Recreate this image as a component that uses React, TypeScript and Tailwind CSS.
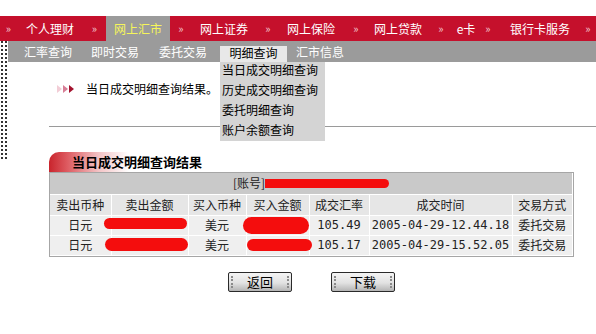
import React from 'react';

const cjk = { fontFamily: '"Noto Sans CJK SC", "Noto Sans", sans-serif' };
const mono = { fontFamily: '"DejaVu Sans Mono", "Liberation Mono", monospace' };

const topNav: { label: string; w: string; active?: boolean }[] = [
  { label: '个人理财', w: 'w-[66px]' },
  { label: '网上汇市', w: 'w-[64px]', active: true },
  { label: '网上证券', w: 'w-[64px]' },
  { label: '网上保险', w: 'w-[62px]' },
  { label: '网上贷款', w: 'w-[56px]' },
  { label: 'e卡', w: 'w-[20px]' },
  { label: '银行卡服务', w: 'w-[80px]' },
];
const sepW = ['w-[17px]', 'w-[23px]', 'w-[22px]', 'w-[24px]', 'w-[28px]', 'w-[30px]', 'w-[24px]', 'w-[16px]'];

const Sep = ({ w }: { w: string }) => (
  <span className={`${w} text-center text-[11px] text-[#f3c7cf]`}>»</span>
);

const Arrows = () => (
  <svg width="18" height="8" viewBox="0 0 18 8">
    <polygon points="0,0 5,4 0,8" fill="#f2cdd6" />
    <polygon points="6,0 11,4 6,8" fill="#d87e96" />
    <polygon points="12,0 17,4 12,8" fill="#a3122e" />
  </svg>
);

const Redact = ({ cls }: { cls: string }) => (
  <span className={`absolute rounded-full bg-[#f40d0d] ${cls}`} />
);

const Button = ({ label }: { label: string }) => (
  <button className="relative flex h-[20px] w-[64px] items-center justify-center rounded-[2px] border border-[#2a2a2a] bg-[linear-gradient(to_bottom,#f4f4f4,#e2e2e2_55%,#b4b4b4)] text-[13px] text-black">
    <span className="absolute left-[2px] top-[3px] h-[12px] w-[2px] border-l-2 border-dotted border-[#8a8a8a]" />
    {label}
    <span className="absolute right-[2px] top-[3px] h-[12px] w-[2px] border-l-2 border-dotted border-[#8a8a8a]" />
  </button>
);

const td = 'border-r border-b border-white text-center text-[12px] text-[#222] p-0';

const rows = [
  { rate: '105.49', time: '2005-04-29-12.44.18', a: 'left-[-8px] top-[2px] w-[83px] h-[11px]', b: 'left-[-4px] top-[1px] w-[66px] h-[17px]' },
  { rate: '105.17', time: '2005-04-29-15.52.05', a: 'left-[-7px] top-[2px] w-[83px] h-[13px]', b: 'left-[0px] top-[3px] w-[65px] h-[12px]' },
];

export default function App() {
  return (
    <div className="h-[334px] w-[596px] overflow-hidden bg-white" style={cjk}>
      <div className="h-[16px]" />
      <div className="flex h-[25px] items-center bg-[#c5102c] text-[12px] text-white">
        {topNav.map((n, i) => (
          <React.Fragment key={n.label}>
            <Sep w={sepW[i]} />
            <span
              className={`${n.w} flex h-full items-center justify-center whitespace-nowrap ${
                n.active ? 'bg-[#9b9b9b] text-[#f6f55a]' : ''
              }`}
            >
              {n.label}
            </span>
          </React.Fragment>
        ))}
        <Sep w={sepW[7]} />
      </div>

      <div className="flex">
        <div className="ml-[1px] mr-[1px] h-[118px] w-[6px] border-x-2 border-dotted border-[#333]" />
        <div className="relative flex-1">
          <div className="flex h-[21px] items-center whitespace-nowrap bg-[#9b9b9b] pl-[16px] text-[12px] text-white">
            <span className="w-[48px]">汇率查询</span>
            <span className="ml-[19px] w-[48px]">即时交易</span>
            <span className="ml-[20px] w-[48px]">委托交易</span>
            <span className="ml-[13px] h-[16px] w-[67px] self-end bg-[#e8e8e8] text-center leading-[13px] text-black">
              明细查询
            </span>
            <span className="ml-[9px]">汇市信息</span>
          </div>

          <div className="absolute left-[212px] top-[21px] z-10 h-[79px] w-[105px] bg-[#d4d4d4] pl-[2px] text-[12px] text-black">
            <div className="-mt-[2px] flex flex-col whitespace-nowrap leading-[20px]">
              <span>当日成交明细查询</span>
              <span>历史成交明细查询</span>
              <span>委托明细查询</span>
              <span>账户余额查询</span>
            </div>
          </div>

          <div className="ml-[49px] mt-[19px] flex h-[16px] items-center text-[12px] leading-[16px] text-black">
            <Arrows />
            <span className="ml-[11px]">当日成交明细查询结果。</span>
          </div>

          <div className="ml-[41px] mt-[29px] h-px bg-[#9a9a9a]" />

          <div className="ml-[41px] mt-[25px] w-[525px]">
            <div className="flex h-[20px] items-center rounded-tl-[10px] bg-[linear-gradient(to_right,#c9242c_0px,#dd5a60_18px,#f3c4c6_50px,#ffffff_80px)] pl-[23px] text-[13px] font-bold text-black">
              当日成交明细查询结果
            </div>
            <div className="border border-[#a6a6a6]">
              <table className="w-full table-fixed border-collapse">
                <colgroup>
                  <col className="w-[61px]" />
                  <col className="w-[77px]" />
                  <col className="w-[58px]" />
                  <col className="w-[63px]" />
                  <col className="w-[60px]" />
                  <col className="w-[143px]" />
                  <col />
                </colgroup>
                <tbody>
                  <tr className="h-[21px] bg-[#c9c9c9]">
                    <td colSpan={7} className={td}>
                      <span className="inline-flex items-center">
                        [账号]
                        <span className="inline-block h-[9px] w-[124px] rounded-l-[3px] rounded-r-full bg-[#f40d0d]" />
                      </span>
                    </td>
                  </tr>
                  <tr className="h-[21px] bg-[#e6e6e6]">
                    {['卖出币种', '卖出金额', '买入币种', '买入金额', '成交汇率', '成交时间', '交易方式'].map((h) => (
                      <td key={h} className={td}>
                        {h}
                      </td>
                    ))}
                  </tr>
                  {rows.map((r) => (
                    <tr key={r.time} className="h-[20px] bg-[#efefef]">
                      <td className={td}>日元</td>
                      <td className={`${td} relative`}>
                        <Redact cls={r.a} />
                      </td>
                      <td className={td}>美元</td>
                      <td className={`${td} relative`}>
                        <Redact cls={r.b} />
                      </td>
                      <td className={`${td} text-[10px]`} style={mono}>
                        {r.rate}
                      </td>
                      <td className={`${td} text-[10px]`} style={mono}>
                        {r.time}
                      </td>
                      <td className={td}>委托交易</td>
                    </tr>
                  ))}
                </tbody>
              </table>
            </div>
            <div className="mt-[15px] flex justify-center gap-[39px]">
              <Button label="返回" />
              <Button label="下载" />
            </div>
          </div>
        </div>
      </div>
    </div>
  );
}
